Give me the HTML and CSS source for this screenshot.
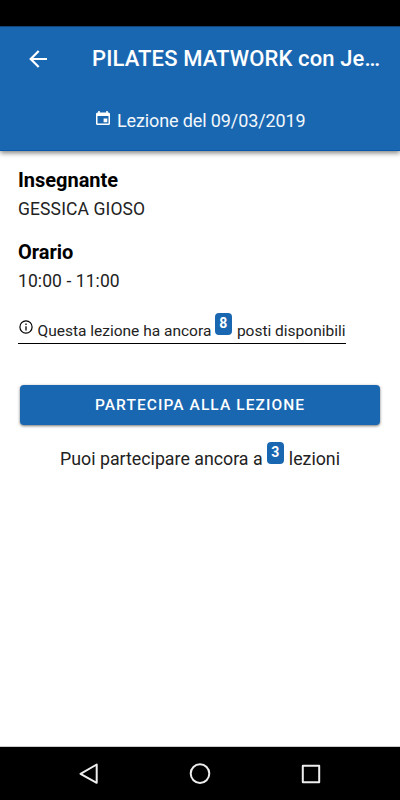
FILE: index.html
```
<!DOCTYPE html>
<html lang="it">
<head>
<meta charset="utf-8">
<title>Lezione</title>
<link rel="stylesheet" href="styles.css">
</head>
<body>
<div class="status"></div>
<header class="header">
  <div class="toolbar">
    <svg class="back" viewBox="0 0 18 18"><path d="M18 9H2M9.7 1 1.7 9l8 8" fill="none" stroke="currentColor" stroke-width="2.2"/></svg>
    <h1 class="title">PILATES MATWORK con Je…</h1>
  </div>
  <div class="date">
    <svg class="calendar" viewBox="0 0 14 15"><path fill="currentColor" fill-rule="evenodd" d="M2.2 0h1.6v1.4h6.4V0h1.6v1.4h.7A1.5 1.5 0 0 1 14 2.9v9.6a1.5 1.5 0 0 1-1.5 1.5h-11A1.5 1.5 0 0 1 0 12.5V2.9a1.5 1.5 0 0 1 1.5-1.5h.7zM1.5 5v7.5h11V5zM7.6 7.6h3.7v3.7H7.6z"/></svg>
    <span class="date-text">Lezione del 09/03/2019</span>
  </div>
</header>
<main class="content">
  <section class="field"><h2>Insegnante</h2><p class="teacher">GESSICA GIOSO</p></section>
  <section class="field"><h2>Orario</h2><p class="time">10:00 - 11:00</p></section>
  <div class="places">
    <svg class="info" viewBox="0 0 14 14"><circle cx="7" cy="7" r="6.1" fill="none" stroke="currentColor" stroke-width="1.2"/><path d="M7 6.2v4.2M7 3.6V5" stroke="currentColor" stroke-width="1.3"/></svg>
    <span class="places-text">Questa lezione ha ancora</span>
    <span class="badge">8</span>
    <span class="places-text">posti disponibili</span>
  </div>
  <button class="join">PARTECIPA ALLA LEZIONE</button>
  <div class="remaining">
    <span class="remaining-text">Puoi partecipare ancora a</span>
    <span class="badge">3</span>
    <span class="remaining-text">lezioni</span>
  </div>
</main>
<nav class="nav">
  <svg viewBox="0 0 24 24"><path d="M19.7 2.5v18.3L3.5 11.8z"/></svg>
  <svg viewBox="0 0 24 24"><circle cx="12" cy="11.6" r="9.3"/></svg>
  <svg viewBox="0 0 24 24"><path d="M3.8 3.8h16.4v16.4H3.8z"/></svg>
</nav>
</body>
</html>
```
FILE: styles.css
```
* { box-sizing: border-box; }
body {
  margin: 0;
  height: 800px;
  display: flex;
  flex-direction: column;
  overflow: hidden;
  background: #fff;
  color: #000;
  font-family: Roboto, sans-serif;
  white-space: nowrap;
}
h1, h2, p { margin: 0; }
svg { flex: none; }
.status { height: 26px; background: #000; }
.header {
  height: 125px;
  background: #1a67b1;
  color: #fff;
  border-top: 1px solid #10467c;
  border-bottom: 1px solid #0858a7;
  box-shadow: 0 2px 5px rgba(0, 0, 0, .5);
}
.toolbar { height: 63px; display: flex; align-items: center; padding-left: 29px; }
.back { width: 18px; height: 18px; margin-right: 45px; }
.title { font-size: 22px; line-height: 26px; font-weight: 500; letter-spacing: .12px; }
.date { height: 61px; display: flex; align-items: center; padding-left: 96px; }
.calendar { width: 14px; height: 15px; margin: -5px 7px 0 0; }
.date-text { font-size: 18px; line-height: 24px; letter-spacing: -.12px; color: #f3f7fb; }
.content { flex: 1; padding: 15px 18px 0; border-bottom: 1px solid #c8cccf; }
.field { height: 72px; }
.field h2 { font-size: 20px; line-height: 28px; font-weight: 700; letter-spacing: -.02px; }
.field p { padding-top: 1px; font-size: 17.5px; line-height: 28px; color: #222; }
.field .teacher { letter-spacing: .12px; }
.field .time { letter-spacing: .08px; }
.places {
  width: 327.5px;
  height: 31px;
  margin-top: 3px;
  display: flex;
  align-items: flex-start;
  border-bottom: 1px solid #000;
  font-size: 15.5px;
  line-height: 20px;
  color: #222;
}
.info { width: 14px; height: 14px; margin: 7px 5px 0 .5px; color: #000; }
.places-text { margin-top: 8px; }
.badge {
  flex: none;
  width: 17px;
  height: 22px;
  border-radius: 4px;
  background: #1a67b1;
  color: #fff;
  font-size: 14px;
  line-height: 21px;
  font-weight: 700;
  text-align: center;
}
.places .badge { margin: 0 5px 0 auto; }
.join {
  display: block;
  width: 360px;
  height: 40px;
  margin: 40.5px 0 0 2px;
  padding: 0;
  border: 0;
  border-radius: 4px;
  background: #1a67b1;
  color: #fff;
  font: 500 15.5px/38px Roboto, sans-serif;
  letter-spacing: 1.08px;
  box-shadow: 0 1px 3px rgba(0, 0, 0, .55);
}
.remaining { display: flex; margin: 17.5px 0 0 42px; width: 280px; font-size: 17.8px; line-height: 24px; color: #222; }
.remaining-text { margin-top: 5px; }
.remaining .badge { margin: 0 5px 0 auto; }
.nav { height: 53px; background: #000; display: flex; align-items: center; justify-content: space-between; padding: 0 77px; }
.nav svg { width: 24px; height: 24px; fill: none; stroke: #eee; stroke-width: 2; stroke-linejoin: round; }
```
